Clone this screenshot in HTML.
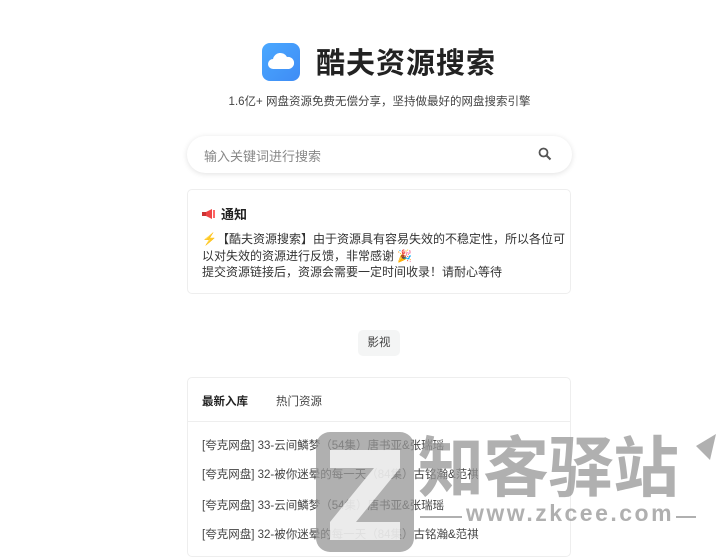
<!DOCTYPE html>
<html><head><meta charset="utf-8"><style>
*{margin:0;padding:0;box-sizing:border-box}
body{width:720px;height:545px;overflow:hidden;background:#fff;font-family:"Liberation Sans","Noto Sans CJK SC",sans-serif;color:#333;position:relative}
.abs{position:absolute}
.logo{left:262px;top:43px;width:38px;height:38px;border-radius:8px;background:linear-gradient(135deg,#4aa8ff,#3f8cf5)}
.title{left:316px;top:45px;font-size:29px;font-weight:bold;color:#222;letter-spacing:1px;line-height:38px}
.sub{left:187px;width:385px;text-align:center;top:94px;font-size:11.5px;color:#444;line-height:16px}
.search{left:187px;top:136px;width:385px;height:37px;border-radius:19px;background:#fff;box-shadow:0 1px 6px rgba(0,0,0,.12)}
.search span{position:absolute;left:17px;top:10px;font-size:13px;color:#888}
.card{border:1px solid #eee;border-radius:5px;background:#fff}
.notice{left:187px;top:189px;width:384px;height:105px}
.nt{left:14px;top:14px;font-size:13px;font-weight:bold;color:#222;display:flex;align-items:center;gap:5px}
.nb{left:14px;top:41px;font-size:12px;line-height:16.5px;color:#333;width:372px}
.tag{left:358px;top:330px;width:42px;height:26px;background:#f4f5f5;border-radius:5px;font-size:11.5px;text-align:center;line-height:26px;color:#444}
.list{left:187px;top:377px;width:384px;height:180px}
.tabs{position:absolute;left:0;top:0;width:100%;height:44px;border-bottom:1px solid #eee;font-size:11.5px}
.item{position:absolute;left:14px;font-size:11.5px;color:#444}
.wm{color:rgba(150,150,150,.75)}
</style></head><body>
<div class="abs logo"><svg width="38" height="38" viewBox="0 0 38 38"><path d="M11 26 a5 5 0 0 1 0-10 a7.5 7.5 0 0 1 14-2 a6 6 0 0 1 2 12 z" fill="#fff"/></svg></div>
<div class="abs title">酷夫资源搜索</div>
<div class="abs sub">1.6亿+ 网盘资源免费无偿分享，坚持做最好的网盘搜索引擎</div>
<div class="abs search"><span>输入关键词进行搜索</span>
<svg class="abs" style="left:351px;top:11px" width="14" height="14" viewBox="0 0 14 14"><circle cx="5.5" cy="5.5" r="4" fill="none" stroke="#555" stroke-width="1.8"/><path d="M8.5 8.5 L12.5 12.5" stroke="#555" stroke-width="2"/></svg></div>
<div class="abs card notice">
<div class="abs nt"><svg width="14" height="10" viewBox="0 0 14 10"><rect x="0" y="3" width="4" height="4" fill="#c33"/><path d="M4 3 L10 0 L10 10 L4 7Z" fill="#e44"/><rect x="11" y="1" width="2" height="8" fill="#f66"/></svg>通知</div>
<div class="abs nb"><span style="color:#f80">⚡</span>【酷夫资源搜索】由于资源具有容易失效的不稳定性，所以各位可以对失效的资源进行反馈，非常感谢 🎉<br>提交资源链接后，资源会需要一定时间收录！请耐心等待</div>
</div>
<div class="abs tag">影视</div>
<div class="abs card list">
<div class="tabs"><span class="abs" style="left:14px;top:15px;font-weight:bold;color:#222">最新入库</span><span class="abs" style="left:88px;top:15px;color:#444">热门资源</span></div>
<div class="item" style="top:59px">[夸克网盘] 33-云间鱗梦（54集）唐书亚&amp;张瑞瑶</div>
<div class="item" style="top:88px">[夸克网盘] 32-被你迷晕的每一天（84集）古铭瀚&amp;范祺</div>
<div class="item" style="top:119px">[夸克网盘] 33-云间鱗梦（54集）唐书亚&amp;张瑞瑶</div>
<div class="item" style="top:148px">[夸克网盘] 32-被你迷晕的每一天（84集）古铭瀚&amp;范祺</div>
</div>
<svg class="abs" style="left:316px;top:432px" width="98" height="120" viewBox="0 0 98 120"><rect width="98" height="120" rx="14" fill="rgba(150,150,150,.75)"/><path d="M14 18 H84 V36 L40 90 H84 V108 H14 V90 L58 36 H14Z" fill="rgba(255,255,255,.75)"/></svg>
<div class="abs wm" style="left:418px;top:428px;font-size:66px;font-weight:bold;line-height:80px;letter-spacing:-1px">知客驿站</div>
<div class="abs wm" style="left:466px;top:500px;font-size:23px;font-weight:bold;line-height:26px;letter-spacing:2.5px">www.zkcee.com</div>
<div class="abs" style="left:420px;top:516px;width:42px;height:2px;background:rgba(150,150,150,.75)"></div>
<div class="abs" style="left:676px;top:516px;width:20px;height:2px;background:rgba(150,150,150,.75)"></div>
<svg class="abs" style="left:694px;top:432px" width="24" height="30"><path d="M2 14 L22 2 L16 28 Z" fill="rgba(150,150,150,.75)"/></svg>
</body></html>
